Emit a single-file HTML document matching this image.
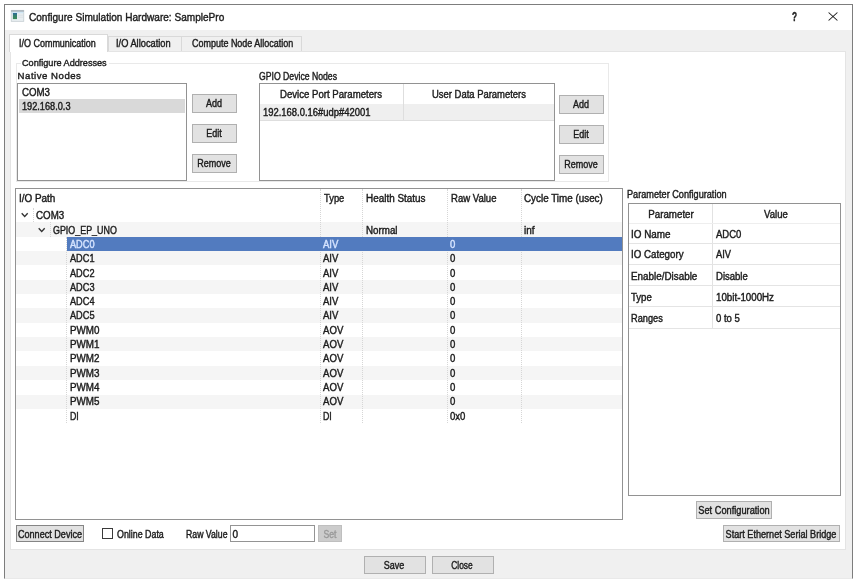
<!DOCTYPE html>
<html lang="en">
<head>
<meta charset="utf-8">
<title>Configure Simulation Hardware: SamplePro</title>
<style>
html,body{margin:0;padding:0;}
body{width:854px;height:580px;background:#fff;position:relative;overflow:hidden;font-family:"Liberation Sans", sans-serif;}
.a{position:absolute;box-sizing:border-box;}
.t{position:absolute;white-space:nowrap;height:20px;line-height:20px;-webkit-text-stroke:0.4px;}
#w,#tx{position:absolute;left:0;top:0;width:854px;height:580px;filter:blur(0.45px);}
#w{filter:blur(0.6px);}
</style>
</head>
<body>
<div id="w">
<div class="a" style="left:4.0px;top:4.0px;width:849.0px;height:574.5px;background:#f0f0f0;border:1px solid #7d7d7d;border-bottom-color:#e9e9e9;"></div>
<div class="a" style="left:5.0px;top:5.0px;width:847.0px;height:25.0px;background:#fff;"></div>
<div class="a" style="left:9.5px;top:51.0px;width:836.0px;height:498.5px;background:#fff;border:1px solid #e4e4e4;"></div>
<div class="a" style="left:107.5px;top:36.3px;width:74.0px;height:15.2px;background:#f0f0f0;border:1px solid #d9d9d9;border-bottom:none;"></div>
<div class="a" style="left:181.5px;top:36.3px;width:120.0px;height:15.2px;background:#f0f0f0;border:1px solid #d9d9d9;border-left:none;border-bottom:none;"></div>
<div class="a" style="left:8.8px;top:34.0px;width:99.0px;height:18.0px;background:#fff;border:1px solid #d9d9d9;border-bottom:none;"></div>
<div class="a" style="left:15.6px;top:62.5px;width:593.0px;height:119.5px;border:1px solid #e9e9e9;background:#fff;"></div>
<div class="a" style="left:20.5px;top:58.0px;width:88.0px;height:10.0px;background:#fff;"></div>
<div class="a" style="left:17.0px;top:83.0px;width:170.0px;height:98.0px;background:#fff;border:1px solid #929292;"></div>
<div class="a" style="left:19.0px;top:99.4px;width:165.5px;height:13.9px;background:#d9d9d9;"></div>
<div class="a" style="left:192.0px;top:94.0px;width:45.0px;height:19.0px;background:#e2e2e2;border:1px solid #b0b0b0;"></div>
<div class="a" style="left:192.0px;top:124.0px;width:45.0px;height:19.0px;background:#e2e2e2;border:1px solid #b0b0b0;"></div>
<div class="a" style="left:192.0px;top:154.0px;width:45.0px;height:19.0px;background:#e2e2e2;border:1px solid #b0b0b0;"></div>
<div class="a" style="left:559.3px;top:95.0px;width:45.0px;height:19.0px;background:#e2e2e2;border:1px solid #b0b0b0;"></div>
<div class="a" style="left:559.3px;top:125.0px;width:45.0px;height:19.0px;background:#e2e2e2;border:1px solid #b0b0b0;"></div>
<div class="a" style="left:559.3px;top:155.0px;width:45.0px;height:19.0px;background:#e2e2e2;border:1px solid #b0b0b0;"></div>
<div class="a" style="left:258.7px;top:83.0px;width:296.5px;height:98.0px;background:#fff;border:1px solid #929292;"></div>
<div class="a" style="left:259.7px;top:103.5px;width:294.5px;height:16.0px;background:#efefef;"></div>
<div class="a" style="left:403.0px;top:84.0px;width:1.0px;height:35.7px;background:#dedede;"></div>
<div class="a" style="left:259.7px;top:119.5px;width:294.5px;height:1.0px;background:#dedede;"></div>
<div class="a" style="left:14.7px;top:187.7px;width:608.6px;height:332.3px;background:#fff;border:1px solid #929292;"></div>
<div class="a" style="left:15.7px;top:222.2px;width:606.6px;height:14.4px;background:#f5f5f5;"></div>
<div class="a" style="left:15.7px;top:250.9px;width:606.6px;height:14.4px;background:#f5f5f5;"></div>
<div class="a" style="left:15.7px;top:279.7px;width:606.6px;height:14.4px;background:#f5f5f5;"></div>
<div class="a" style="left:15.7px;top:308.4px;width:606.6px;height:14.4px;background:#f5f5f5;"></div>
<div class="a" style="left:15.7px;top:337.1px;width:606.6px;height:14.4px;background:#f5f5f5;"></div>
<div class="a" style="left:15.7px;top:365.8px;width:606.6px;height:14.4px;background:#f5f5f5;"></div>
<div class="a" style="left:15.7px;top:394.6px;width:606.6px;height:14.4px;background:#f5f5f5;"></div>
<div class="a" style="left:320.4px;top:188.7px;width:0.0px;height:234.6px;border-left:1px dotted #d6d6d6;"></div>
<div class="a" style="left:362.3px;top:188.7px;width:0.0px;height:234.6px;border-left:1px dotted #d6d6d6;"></div>
<div class="a" style="left:447.4px;top:188.7px;width:0.0px;height:234.6px;border-left:1px dotted #d6d6d6;"></div>
<div class="a" style="left:520.8px;top:188.7px;width:0.0px;height:234.6px;border-left:1px dotted #d6d6d6;"></div>
<div class="a" style="left:66.3px;top:236.6px;width:0.0px;height:186.7px;border-left:1px dotted #d6d6d6;"></div>
<div class="a" style="left:32.8px;top:207.9px;width:0.0px;height:14.4px;border-left:1px dotted #d6d6d6;"></div>
<div class="a" style="left:50.2px;top:222.2px;width:0.0px;height:14.4px;border-left:1px dotted #d6d6d6;"></div>
<div class="a" style="left:66.7px;top:236.7px;width:555.6px;height:14.3px;background:#527bbf;"></div>
<div class="a" style="left:627.5px;top:203.2px;width:213.0px;height:293.0px;background:#fff;border:1px solid #929292;"></div>
<div class="a" style="left:712.0px;top:204.2px;width:1.0px;height:124.8px;background:#e2e2e2;"></div>
<div class="a" style="left:628.5px;top:223.0px;width:211.0px;height:1.0px;background:#eeeeee;"></div>
<div class="a" style="left:628.5px;top:243.0px;width:211.0px;height:1.0px;background:#e4e4e4;"></div>
<div class="a" style="left:628.5px;top:264.0px;width:211.0px;height:1.0px;background:#e4e4e4;"></div>
<div class="a" style="left:628.5px;top:285.0px;width:211.0px;height:1.0px;background:#e4e4e4;"></div>
<div class="a" style="left:628.5px;top:306.0px;width:211.0px;height:1.0px;background:#e4e4e4;"></div>
<div class="a" style="left:628.5px;top:328.0px;width:211.0px;height:1.0px;background:#e4e4e4;"></div>
<div class="a" style="left:696.3px;top:501.3px;width:75.7px;height:17.5px;background:#e2e2e2;border:1px solid #b0b0b0;"></div>
<div class="a" style="left:15.5px;top:524.8px;width:68.5px;height:17.6px;background:#e1e1e1;border:1px solid #858585;"></div>
<div class="a" style="left:102.2px;top:528.3px;width:10.6px;height:10.7px;background:#fff;border:1px solid #3a3a3a;"></div>
<div class="a" style="left:229.5px;top:525.0px;width:85.0px;height:16.5px;background:#fff;border:1px solid #949494;"></div>
<div class="a" style="left:317.5px;top:524.8px;width:24.7px;height:17.4px;background:#cccccc;border:1px solid #bfbfbf;"></div>
<div class="a" style="left:723.3px;top:524.8px;width:116.6px;height:17.4px;background:#e2e2e2;border:1px solid #b0b0b0;"></div>
<div class="a" style="left:364.3px;top:556.3px;width:61.7px;height:17.6px;background:#e2e2e2;border:1px solid #b0b0b0;"></div>
<div class="a" style="left:432.0px;top:556.3px;width:61.7px;height:17.6px;background:#e2e2e2;border:1px solid #b0b0b0;"></div>

<svg class="a" style="left:10px;top:9px" width="15" height="14" viewBox="0 0 15 14"><defs><linearGradient id="g1" x1="0" y1="0" x2="0" y2="1"><stop offset="0" stop-color="#2c6a9c"/><stop offset="0.45" stop-color="#35806c"/><stop offset="1" stop-color="#3b8a56"/></linearGradient></defs><rect x="1.2" y="1.3" width="12.6" height="11" fill="#e8eef1" stroke="#bfc8cd" stroke-width="0.7"/><rect x="1.2" y="1.3" width="12.6" height="1.5" fill="#a2adb5"/><rect x="1.6" y="2.8" width="11.8" height="1.5" fill="#cfe6f4"/><rect x="2.9" y="4" width="4.1" height="6.1" fill="url(#g1)"/><path d="M8 6.2H13 M8 8.2H13" stroke="#d3dadd" stroke-width="0.6"/></svg>
<svg class="a" style="left:827.9px;top:12px" width="10" height="9" viewBox="0 0 10 10" preserveAspectRatio="none"><path d="M0.6 0.6 L9.4 9.4 M9.4 0.6 L0.6 9.4" stroke="#1a1a1a" stroke-width="1.05" fill="none"/></svg>
<svg class="a" style="left:20.6px;top:212.2px" width="8" height="7" viewBox="0 0 8 7"><path d="M0.7 1.3 L3.7 4.5 L6.7 1.3" stroke="#333" stroke-width="1.35" fill="none"/></svg>
<svg class="a" style="left:38.2px;top:226.8px" width="8" height="7" viewBox="0 0 8 7"><path d="M0.7 1.3 L3.7 4.5 L6.7 1.3" stroke="#333" stroke-width="1.35" fill="none"/></svg>
</div>
<div id="tx">
<div class="t" style="top:7px;font-size:11px;color:#1c1c1c;transform:scaleX(0.915);transform-origin:left center;left:28.8px;"><span>Configure Simulation Hardware: SamplePro</span></div>
<div class="t" style="top:7px;font-size:12.5px;color:#222;left:792.2px;font-weight:bold;transform:scaleX(0.66);transform-origin:left center;"><span>?</span></div>
<div class="t" style="top:34px;font-size:10px;color:#1c1c1c;transform:scaleX(0.897);transform-origin:left center;left:18.7px;"><span>I/O Communication</span></div>
<div class="t" style="top:34px;font-size:10px;color:#1c1c1c;transform:scaleX(0.927);transform-origin:left center;left:116.2px;"><span>I/O Allocation</span></div>
<div class="t" style="top:34px;font-size:10px;color:#1c1c1c;transform:scaleX(0.897);transform-origin:left center;left:191.5px;"><span>Compute Node Allocation</span></div>
<div class="t" style="top:53px;font-size:9.7px;color:#1c1c1c;transform:scaleX(0.941);transform-origin:left center;left:21.8px;"><span>Configure Addresses</span></div>
<div class="t" style="top:66px;font-size:9.6px;color:#1c1c1c;left:17.6px;letter-spacing:0.52px;"><span>Native Nodes</span></div>
<div class="t" style="top:67px;font-size:10px;color:#1c1c1c;transform:scaleX(0.866);transform-origin:left center;left:259.0px;"><span>GPIO Device Nodes</span></div>
<div class="t" style="top:83px;font-size:10px;color:#1c1c1c;transform:scaleX(0.969);transform-origin:left center;left:21.7px;"><span>COM3</span></div>
<div class="t" style="top:97px;font-size:10px;color:#1c1c1c;transform:scaleX(0.918);transform-origin:left center;left:21.7px;"><span>192.168.0.3</span></div>
<div class="t" style="top:94px;font-size:10px;color:#1c1c1c;transform:scaleX(0.899);transform-origin:center center;left:64.1px;width:300px;text-align:center;"><span>Add</span></div>
<div class="t" style="top:124px;font-size:10px;color:#1c1c1c;transform:scaleX(0.899);transform-origin:center center;left:64.1px;width:300px;text-align:center;"><span>Edit</span></div>
<div class="t" style="top:154px;font-size:10px;color:#1c1c1c;transform:scaleX(0.899);transform-origin:center center;left:64.1px;width:300px;text-align:center;"><span>Remove</span></div>
<div class="t" style="top:95px;font-size:10px;color:#1c1c1c;transform:scaleX(0.899);transform-origin:center center;left:431.4px;width:300px;text-align:center;"><span>Add</span></div>
<div class="t" style="top:125px;font-size:10px;color:#1c1c1c;transform:scaleX(0.899);transform-origin:center center;left:431.4px;width:300px;text-align:center;"><span>Edit</span></div>
<div class="t" style="top:155px;font-size:10px;color:#1c1c1c;transform:scaleX(0.899);transform-origin:center center;left:431.4px;width:300px;text-align:center;"><span>Remove</span></div>
<div class="t" style="top:85px;font-size:10px;color:#1c1c1c;transform:scaleX(0.961);transform-origin:center center;left:181.0px;width:300px;text-align:center;"><span>Device Port Parameters</span></div>
<div class="t" style="top:85px;font-size:10px;color:#1c1c1c;transform:scaleX(0.945);transform-origin:center center;left:329.0px;width:300px;text-align:center;"><span>User Data Parameters</span></div>
<div class="t" style="top:103px;font-size:10px;color:#1c1c1c;transform:scaleX(0.943);transform-origin:left center;left:262.5px;"><span>192.168.0.16#udp#42001</span></div>
<div class="t" style="top:189px;font-size:10px;color:#1c1c1c;transform:scaleX(0.992);transform-origin:left center;left:18.9px;"><span>I/O Path</span></div>
<div class="t" style="top:189px;font-size:10px;color:#1c1c1c;transform:scaleX(0.936);transform-origin:left center;left:324.3px;"><span>Type</span></div>
<div class="t" style="top:189px;font-size:10px;color:#1c1c1c;transform:scaleX(0.991);transform-origin:left center;left:365.7px;"><span>Health Status</span></div>
<div class="t" style="top:189px;font-size:10px;color:#1c1c1c;transform:scaleX(0.955);transform-origin:left center;left:450.5px;"><span>Raw Value</span></div>
<div class="t" style="top:189px;font-size:10px;color:#1c1c1c;transform:scaleX(0.985);transform-origin:left center;left:523.7px;"><span>Cycle Time (usec)</span></div>
<div class="t" style="top:206px;font-size:10px;color:#1c1c1c;transform:scaleX(0.976);transform-origin:left center;left:36.3px;"><span>COM3</span></div>
<div class="t" style="top:221px;font-size:10px;color:#1c1c1c;transform:scaleX(0.891);transform-origin:left center;left:53.2px;"><span>GPIO_EP_UNO</span></div>
<div class="t" style="top:235px;font-size:10px;color:#d6e4ff;transform:scaleX(0.918);transform-origin:left center;left:70.4px;"><span>ADC0</span></div>
<div class="t" style="top:235px;font-size:10px;color:#d6e4ff;transform:scaleX(0.955);transform-origin:left center;left:323.3px;"><span>AIV</span></div>
<div class="t" style="top:235px;font-size:10px;color:#d6e4ff;left:449.8px;transform:scaleX(0.955);transform-origin:left center;"><span>0</span></div>
<div class="t" style="top:249px;font-size:10px;color:#1c1c1c;transform:scaleX(0.918);transform-origin:left center;left:70.4px;"><span>ADC1</span></div>
<div class="t" style="top:249px;font-size:10px;color:#1c1c1c;transform:scaleX(0.955);transform-origin:left center;left:323.3px;"><span>AIV</span></div>
<div class="t" style="top:249px;font-size:10px;color:#1c1c1c;left:449.8px;transform:scaleX(0.955);transform-origin:left center;"><span>0</span></div>
<div class="t" style="top:264px;font-size:10px;color:#1c1c1c;transform:scaleX(0.918);transform-origin:left center;left:70.4px;"><span>ADC2</span></div>
<div class="t" style="top:264px;font-size:10px;color:#1c1c1c;transform:scaleX(0.955);transform-origin:left center;left:323.3px;"><span>AIV</span></div>
<div class="t" style="top:264px;font-size:10px;color:#1c1c1c;left:449.8px;transform:scaleX(0.955);transform-origin:left center;"><span>0</span></div>
<div class="t" style="top:278px;font-size:10px;color:#1c1c1c;transform:scaleX(0.918);transform-origin:left center;left:70.4px;"><span>ADC3</span></div>
<div class="t" style="top:278px;font-size:10px;color:#1c1c1c;transform:scaleX(0.955);transform-origin:left center;left:323.3px;"><span>AIV</span></div>
<div class="t" style="top:278px;font-size:10px;color:#1c1c1c;left:449.8px;transform:scaleX(0.955);transform-origin:left center;"><span>0</span></div>
<div class="t" style="top:292px;font-size:10px;color:#1c1c1c;transform:scaleX(0.918);transform-origin:left center;left:70.4px;"><span>ADC4</span></div>
<div class="t" style="top:292px;font-size:10px;color:#1c1c1c;transform:scaleX(0.955);transform-origin:left center;left:323.3px;"><span>AIV</span></div>
<div class="t" style="top:292px;font-size:10px;color:#1c1c1c;left:449.8px;transform:scaleX(0.955);transform-origin:left center;"><span>0</span></div>
<div class="t" style="top:306px;font-size:10px;color:#1c1c1c;transform:scaleX(0.918);transform-origin:left center;left:70.4px;"><span>ADC5</span></div>
<div class="t" style="top:306px;font-size:10px;color:#1c1c1c;transform:scaleX(0.955);transform-origin:left center;left:323.3px;"><span>AIV</span></div>
<div class="t" style="top:306px;font-size:10px;color:#1c1c1c;left:449.8px;transform:scaleX(0.955);transform-origin:left center;"><span>0</span></div>
<div class="t" style="top:321px;font-size:10px;color:#1c1c1c;transform:scaleX(0.983);transform-origin:left center;left:70.4px;"><span>PWM0</span></div>
<div class="t" style="top:321px;font-size:10px;color:#1c1c1c;transform:scaleX(0.961);transform-origin:left center;left:323.3px;"><span>AOV</span></div>
<div class="t" style="top:321px;font-size:10px;color:#1c1c1c;left:449.8px;transform:scaleX(0.955);transform-origin:left center;"><span>0</span></div>
<div class="t" style="top:335px;font-size:10px;color:#1c1c1c;transform:scaleX(0.983);transform-origin:left center;left:70.4px;"><span>PWM1</span></div>
<div class="t" style="top:335px;font-size:10px;color:#1c1c1c;transform:scaleX(0.961);transform-origin:left center;left:323.3px;"><span>AOV</span></div>
<div class="t" style="top:335px;font-size:10px;color:#1c1c1c;left:449.8px;transform:scaleX(0.955);transform-origin:left center;"><span>0</span></div>
<div class="t" style="top:349px;font-size:10px;color:#1c1c1c;transform:scaleX(0.983);transform-origin:left center;left:70.4px;"><span>PWM2</span></div>
<div class="t" style="top:349px;font-size:10px;color:#1c1c1c;transform:scaleX(0.961);transform-origin:left center;left:323.3px;"><span>AOV</span></div>
<div class="t" style="top:349px;font-size:10px;color:#1c1c1c;left:449.8px;transform:scaleX(0.955);transform-origin:left center;"><span>0</span></div>
<div class="t" style="top:364px;font-size:10px;color:#1c1c1c;transform:scaleX(0.983);transform-origin:left center;left:70.4px;"><span>PWM3</span></div>
<div class="t" style="top:364px;font-size:10px;color:#1c1c1c;transform:scaleX(0.961);transform-origin:left center;left:323.3px;"><span>AOV</span></div>
<div class="t" style="top:364px;font-size:10px;color:#1c1c1c;left:449.8px;transform:scaleX(0.955);transform-origin:left center;"><span>0</span></div>
<div class="t" style="top:378px;font-size:10px;color:#1c1c1c;transform:scaleX(0.983);transform-origin:left center;left:70.4px;"><span>PWM4</span></div>
<div class="t" style="top:378px;font-size:10px;color:#1c1c1c;transform:scaleX(0.961);transform-origin:left center;left:323.3px;"><span>AOV</span></div>
<div class="t" style="top:378px;font-size:10px;color:#1c1c1c;left:449.8px;transform:scaleX(0.955);transform-origin:left center;"><span>0</span></div>
<div class="t" style="top:392px;font-size:10px;color:#1c1c1c;transform:scaleX(0.983);transform-origin:left center;left:70.4px;"><span>PWM5</span></div>
<div class="t" style="top:392px;font-size:10px;color:#1c1c1c;transform:scaleX(0.961);transform-origin:left center;left:323.3px;"><span>AOV</span></div>
<div class="t" style="top:392px;font-size:10px;color:#1c1c1c;left:449.8px;transform:scaleX(0.955);transform-origin:left center;"><span>0</span></div>
<div class="t" style="top:407px;font-size:10px;color:#1c1c1c;transform:scaleX(0.880);transform-origin:left center;left:70.4px;"><span>DI</span></div>
<div class="t" style="top:407px;font-size:10px;color:#1c1c1c;transform:scaleX(0.880);transform-origin:left center;left:323.3px;"><span>DI</span></div>
<div class="t" style="top:407px;font-size:10px;color:#1c1c1c;left:449.8px;transform:scaleX(0.955);transform-origin:left center;"><span>0x0</span></div>
<div class="t" style="top:221px;font-size:10px;color:#1c1c1c;transform:scaleX(0.977);transform-origin:left center;left:365.7px;"><span>Normal</span></div>
<div class="t" style="top:221px;font-size:10px;color:#1c1c1c;transform:scaleX(0.994);transform-origin:left center;left:523.7px;"><span>inf</span></div>
<div class="t" style="top:185px;font-size:10px;color:#1c1c1c;transform:scaleX(0.914);transform-origin:left center;left:627.4px;"><span>Parameter Configuration</span></div>
<div class="t" style="top:205px;font-size:10px;color:#1c1c1c;transform:scaleX(0.975);transform-origin:center center;left:521.0px;width:300px;text-align:center;"><span>Parameter</span></div>
<div class="t" style="top:205px;font-size:10px;color:#1c1c1c;transform:scaleX(0.958);transform-origin:center center;left:626.0px;width:300px;text-align:center;"><span>Value</span></div>
<div class="t" style="top:225px;font-size:10px;color:#1c1c1c;transform:scaleX(0.990);transform-origin:left center;left:631.2px;"><span>IO Name</span></div>
<div class="t" style="top:225px;font-size:10px;color:#1c1c1c;transform:scaleX(0.948);transform-origin:left center;left:715.7px;"><span>ADC0</span></div>
<div class="t" style="top:245px;font-size:10px;color:#1c1c1c;transform:scaleX(0.975);transform-origin:left center;left:631.2px;"><span>IO Category</span></div>
<div class="t" style="top:245px;font-size:10px;color:#1c1c1c;transform:scaleX(0.930);transform-origin:left center;left:715.7px;"><span>AIV</span></div>
<div class="t" style="top:267px;font-size:10px;color:#1c1c1c;transform:scaleX(0.986);transform-origin:left center;left:631.2px;"><span>Enable/Disable</span></div>
<div class="t" style="top:267px;font-size:10px;color:#1c1c1c;transform:scaleX(0.953);transform-origin:left center;left:715.7px;"><span>Disable</span></div>
<div class="t" style="top:288px;font-size:10px;color:#1c1c1c;transform:scaleX(0.959);transform-origin:left center;left:631.2px;"><span>Type</span></div>
<div class="t" style="top:288px;font-size:10px;color:#1c1c1c;transform:scaleX(0.975);transform-origin:left center;left:715.7px;"><span>10bit-1000Hz</span></div>
<div class="t" style="top:309px;font-size:10px;color:#1c1c1c;transform:scaleX(0.923);transform-origin:left center;left:631.2px;"><span>Ranges</span></div>
<div class="t" style="top:309px;font-size:10px;color:#1c1c1c;transform:scaleX(0.951);transform-origin:left center;left:715.7px;"><span>0 to 5</span></div>
<div class="t" style="top:501px;font-size:10px;color:#1c1c1c;transform:scaleX(0.923);transform-origin:center center;left:584.1px;width:300px;text-align:center;"><span>Set Configuration</span></div>
<div class="t" style="top:525px;font-size:10px;color:#1c1c1c;transform:scaleX(0.907);transform-origin:center center;left:-100.5px;width:300px;text-align:center;"><span>Connect Device</span></div>
<div class="t" style="top:525px;font-size:10px;color:#1c1c1c;transform:scaleX(0.886);transform-origin:left center;left:117.0px;"><span>Online Data</span></div>
<div class="t" style="top:525px;font-size:10px;color:#1c1c1c;transform:scaleX(0.871);transform-origin:left center;left:185.5px;"><span>Raw Value</span></div>
<div class="t" style="top:525px;font-size:10px;color:#1c1c1c;left:232.5px;"><span>0</span></div>
<div class="t" style="top:525px;font-size:10px;color:#9a9a9a;transform:scaleX(0.866);transform-origin:center center;left:179.8px;width:300px;text-align:center;"><span>Set</span></div>
<div class="t" style="top:525px;font-size:10px;color:#1c1c1c;transform:scaleX(0.910);transform-origin:center center;left:631.3px;width:300px;text-align:center;"><span>Start Ethernet Serial Bridge</span></div>
<div class="t" style="top:556px;font-size:10px;color:#1c1c1c;transform:scaleX(0.899);transform-origin:center center;left:244.3px;width:300px;text-align:center;"><span>Save</span></div>
<div class="t" style="top:556px;font-size:10px;color:#1c1c1c;transform:scaleX(0.841);transform-origin:center center;left:312.0px;width:300px;text-align:center;"><span>Close</span></div>
</div>
</body>
</html>
